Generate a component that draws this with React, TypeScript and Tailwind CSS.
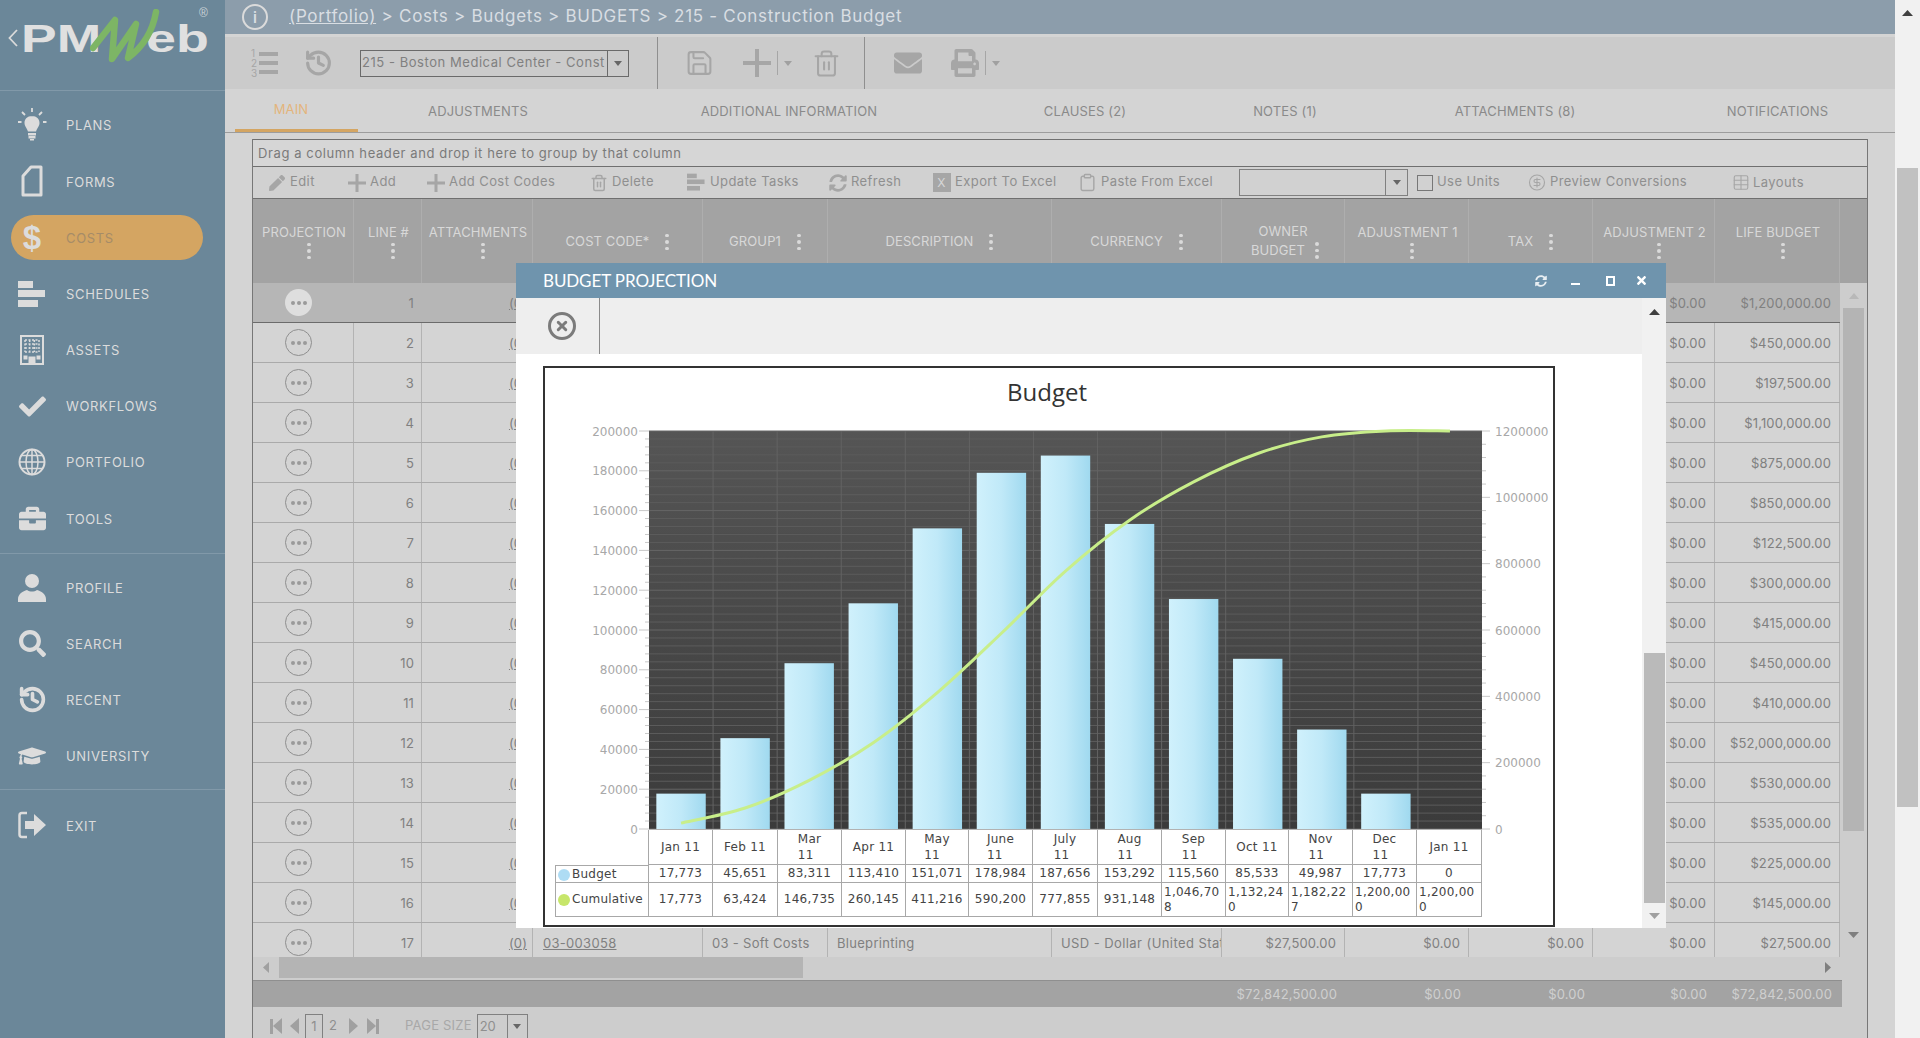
import React from "react";
import { History, Save, Trash2, CircleX, Clipboard, CircleDollarSign, Table } from "lucide-react";
import { FaCheck, FaBriefcase, FaGraduationCap, FaSearch, FaEnvelope, FaPrint, FaPen, FaSyncAlt, FaTimes } from "react-icons/fa";

const Bulb = () => (
  <svg width="30" height="36" viewBox="0 0 30 36" fill="#dcdcdc">
    <path d="M15 9c-4.600 0-7.500 3.200-7.500 7 0 3.400 2.600 5 3.400 8.500h8.200c.8-3.500 3.400-5.100 3.400-8.500 0-3.800-2.900-7-7.500-7z" />
    <rect x="11" y="26" width="8" height="2.500" /><rect x="11.500" y="29" width="7" height="2.500" /><rect x="13" y="32" width="4" height="1.500" />
    <g stroke="#dcdcdc" strokeWidth="1.800"><path d="M15 1v4M5 5l3 3M25 5l-3 3M1 15h3.500M26 15h3.500" /></g>
  </svg>
);
const FormIcon = () => (
  <svg width="22" height="32" viewBox="0 0 22 32" fill="none" stroke="#dcdcdc" strokeWidth="3">
    <path d="M2 11 10 2h10v28H2z" strokeLinejoin="round" />
  </svg>
);
const SchedIcon = ({ c = "#dcdcdc", s = 1 }: { c?: string; s?: number }) => (
  <svg width={28 * s} height={28 * s} viewBox="0 0 28 28" fill={c}>
    <rect x="0" y="1" width="15" height="7" /><rect x="0" y="10" width="27" height="7" /><rect x="0" y="20" width="20" height="7" />
  </svg>
);
const Building = () => (
  <svg width="24" height="30" viewBox="0 0 24 30" fill="none" stroke="#dcdcdc">
    <rect x="1" y="1" width="22" height="28" strokeWidth="2" />
    <path d="M5 5h14M5 9h14M5 13h14M5 17h14M5 5v12M9.700 5v12M14.300 5v12M19 5v12" strokeWidth="1.500" strokeDasharray="2 1.500" />
    <rect x="9" y="22" width="6" height="7" fill="#dcdcdc" /><rect x="4" y="21" width="3" height="3" fill="#dcdcdc" /><rect x="17" y="21" width="3" height="3" fill="#dcdcdc" />
  </svg>
);
const GlobeIcon = () => (
  <svg width="28" height="28" viewBox="0 0 28 28" fill="none" stroke="#dcdcdc" strokeWidth="1.500">
    <circle cx="14" cy="14" r="12.500" strokeWidth="2" />
    <ellipse cx="14" cy="14" rx="6" ry="12.500" />
    <path d="M14 1.500v25M3.500 7.500h21M1.500 14h25M3.500 20.500h21" />
  </svg>
);
const UserIcon = () => (
  <svg width="28" height="30" viewBox="0 0 28 30" fill="#dcdcdc">
    <circle cx="14" cy="8" r="7" /><path d="M0 29v-3c0-5 5-8 9-9 3 2 7 2 10 0 4 1 9 4 9 9v3z" />
  </svg>
);
const ExitIcon = () => (
  <svg width="28" height="30" viewBox="0 0 28 30">
    <path d="M9 3H4C2.500 3 1.500 4 1.500 5.500v19C1.500 26 2.500 27 4 27h5" fill="none" stroke="#dcdcdc" strokeWidth="2.500" />
    <path d="M7 11h9V4l12 11-12 11v-7H7z" fill="#dcdcdc" />
  </svg>
);
const Tri = ({ d, c = "#a0a0a0", w = 8, h = 5 }: { d: "u" | "d" | "l" | "r"; c?: string; w?: number; h?: number }) => {
  const pts = d === "d" ? "0,0 10,0 5,10" : d === "u" ? "0,10 10,10 5,0" : d === "l" ? "10,0 10,10 0,5" : "0,0 0,10 10,5";
  return (
    <svg width={w} height={h} viewBox="0 0 10 10" preserveAspectRatio="none" className="shrink-0"><polygon points={pts} fill={c} /></svg>
  );
};
const PlusIcon = ({ s = 28, t = 4 }: { s?: number; t?: number }) => (
  <svg width={s} height={s} viewBox={`0 0 ${s} ${s}`} fill="#a6a6a6">
    <rect x={(s - t) / 2} y="0" width={t} height={s} /><rect x="0" y={(s - t) / 2} width={s} height={t} />
  </svg>
);
const ListIcon = () => (
  <svg width="28" height="30" viewBox="0 0 28 30" fill="#a6a6a6">
    <rect x="8" y="4" width="19" height="4" /><rect x="8" y="13" width="19" height="4" /><rect x="8" y="22" width="19" height="4" />
    <g fontSize="10" fontFamily="Inter, sans-serif"><text x="0" y="9">1</text><text x="0" y="19">2</text><text x="0" y="29">3</text></g>
  </svg>
);
const Kebab = () => (
  <span className="flex flex-col gap-[3px] shrink-0">
    <span className="w-[4px] h-[3.500px] rounded-full bg-[#dadada]" /><span className="w-[4px] h-[3.500px] rounded-full bg-[#dadada]" /><span className="w-[4px] h-[3.500px] rounded-full bg-[#dadada]" />
  </span>
);

const nav1 = [
  ["PLANS", <Bulb />], ["FORMS", <FormIcon />], ["COSTS", <span className="text-[33px] leading-none font-bold text-[#dcdcdc] [font-family:'Liberation_Sans',sans-serif]">$</span>],
  ["SCHEDULES", <SchedIcon />], ["ASSETS", <Building />], ["WORKFLOWS", <FaCheck size={27} color="#dcdcdc" />],
  ["PORTFOLIO", <GlobeIcon />], ["TOOLS", <FaBriefcase size={27} color="#dcdcdc" />],
] as const;
const nav2 = [
  ["PROFILE", <UserIcon />], ["SEARCH", <FaSearch size={27} color="#dcdcdc" />], ["RECENT", <History size={29} color="#dcdcdc" strokeWidth={3} />],
  ["UNIVERSITY", <FaGraduationCap size={28} color="#dcdcdc" />],
] as const;

const NavRow = ({ label, icon, active }: { label: string; icon: React.ReactNode; active?: boolean }) => (
  <div className="h-[56.200px] flex items-center pl-[11px]">
    <div className={`w-[192px] h-[45px] rounded-full flex items-center ${active ? "bg-[#d4a562]" : ""}`}>
      <div className="w-[42px] flex justify-center items-center">{icon}</div>
      <span className={`ml-[13px] pt-[2px] text-[13px] tracking-[0.65px] ${active ? "text-[#a68c68]" : "text-[#dcdcdc]"}`}>{label}</span>
    </div>
  </div>
);

const Sidebar = () => (
  <aside className="w-[225px] shrink-0 h-full bg-[#6b8799] flex flex-col">
    <div className="relative h-[91px] shrink-0 border-b border-[#8199a9] [font-family:'Liberation_Sans',sans-serif]">
      <svg className="absolute left-[8px] top-[29px]" width="10" height="18" viewBox="0 0 10 18" fill="none" stroke="#dadada" strokeWidth="1.800"><path d="M9 1 1.500 9 9 17" /></svg>
      <span className="absolute left-[21px] top-[19px] text-[39px] leading-[39px] font-bold text-[#e0e0e0] origin-left [transform:scaleX(1.370)]">PM</span>
      <span className="absolute left-[146px] top-[19px] text-[39px] leading-[39px] font-bold text-[#e0e0e0] origin-left [transform:scaleX(1.380)]">eb</span>
      <span className="absolute left-[199px] top-[7px] text-[12px] leading-none text-[#c9d2d8]">®</span>
      <svg className="absolute left-[90px] top-[9px]" width="70" height="56" viewBox="0 0 70 56" fill="none" stroke="#7db565" strokeWidth="6.500" strokeLinejoin="round" strokeLinecap="round">
        <path d="M3 39 25 11 22 50 46 15 38 49C50 40 62 26 66 3" />
      </svg>
    </div>
    <div className="pt-[6px] pb-[6px] border-b border-[#8199a9]">
      {nav1.map(([l, i], k) => <NavRow key={k} label={l} icon={i} active={l === "COSTS"} />)}
    </div>
    <div className="pt-[6px] pb-[5px] border-b border-[#8199a9]">
      {nav2.map(([l, i], k) => <NavRow key={k} label={l} icon={i} />)}
    </div>
    <div className="pt-[7px]"><NavRow label="EXIT" icon={<ExitIcon />} /></div>
  </aside>
);

const TopBars = () => (
  <>
    <div className="h-[34px] shrink-0 bg-[#8c9dab] flex items-center pl-[17px] text-[#d9dee3] [font-family:Inter,sans-serif]">
      <span className="w-[26px] h-[26px] rounded-full border-2 border-[#dbdbdb] flex items-center justify-center text-[15px] font-semibold leading-none">i</span>
      <span className="ml-[21px] text-[17px] tracking-[0.7px]"><span className="underline">(Portfolio)</span> &gt; Costs &gt; Budgets &gt; BUDGETS &gt; 215 - Construction Budget</span>
    </div>
    <div className="h-[55px] shrink-0 bg-[#cbcbcb] border-t-[3px] border-[#d4d4d4] flex items-center">
      <span className="ml-[26px] w-[28px] flex"><ListIcon /></span>
      <span className="ml-[25px] w-[29px] flex"><History size={32} color="#a6a6a6" strokeWidth={2.600} /></span>
      <div className="ml-[27px] w-[269px] h-[27px] border border-[#6a6a6a] flex items-center text-[13px] tracking-[0.55px] text-[#808080]">
        <span className="flex-1 pl-[1px] overflow-hidden whitespace-nowrap">215 - Boston Medical Center - Const</span>
        <span className="w-[21px] h-full border-l border-[#6a6a6a] flex items-center justify-center"><Tri d="d" c="#666" /></span>
      </div>
      <span className="ml-[28px] w-px h-full bg-[#8f8f8f]" />
      <span className="ml-[27px] w-[29px] flex"><Save size={34} color="#a6a6a6" strokeWidth={1.700} /></span>
      <span className="ml-[29px]"><PlusIcon /></span>
      <span className="ml-[6px] w-px h-[24px] bg-[#a6a6a6]" />
      <span className="ml-[6px]"><Tri d="d" /></span>
      <span className="ml-[20px] w-[29px] flex"><Trash2 size={33} color="#a6a6a6" strokeWidth={1.700} /></span>
      <span className="ml-[23px] w-px h-full bg-[#8f8f8f]" />
      <span className="ml-[29px] w-[28px] flex"><FaEnvelope size={28} color="#a6a6a6" /></span>
      <span className="ml-[29px] w-[28px] flex"><FaPrint size={28} color="#a6a6a6" /></span>
      <span className="ml-[6px] w-px h-[24px] bg-[#a6a6a6]" />
      <span className="ml-[6px]"><Tri d="d" /></span>
    </div>
    <div className="h-[44px] shrink-0 bg-[#d4d4d4] border-b border-[#9c9c9c] flex pl-[10px] text-[13px] tracking-[0.15px] text-[#8a8a8a]">
      <div className="w-[123px] pr-[11px] pt-[2px] flex items-center justify-center border-b-[3px] border-[#d4a562] text-[#e3b47c]">MAIN</div>
      <div className="w-[240px] pt-[2px] flex items-center justify-center">ADJUSTMENTS</div>
      <div className="w-[382px] pt-[2px] flex items-center justify-center">ADDITIONAL INFORMATION</div>
      <div className="w-[210px] pt-[2px] flex items-center justify-center">CLAUSES (2)</div>
      <div className="w-[190px] pt-[2px] flex items-center justify-center">NOTES (1)</div>
      <div className="w-[270px] pt-[2px] flex items-center justify-center">ATTACHMENTS (8)</div>
      <div className="w-[245px] pl-[10px] pt-[2px] flex items-center justify-center">NOTIFICATIONS</div>
    </div>
  </>
);

const tbIcon = "#a6a6a6";
const toolItems: [string, string, React.ReactNode][] = [
  ["w-[80px]", "Edit", <FaPen size={16} color={tbIcon} />],
  ["w-[79px]", "Add", <PlusIcon s={18} t={3} />],
  ["w-[163px]", "Add Cost Codes", <PlusIcon s={18} t={3} />],
  ["w-[98px]", "Delete", <Trash2 size={18} color={tbIcon} />],
  ["w-[141px]", "Update Tasks", <SchedIcon c={tbIcon} s={0.65} />],
  ["w-[104px]", "Refresh", <FaSyncAlt size={18} color={tbIcon} />],
  ["w-[146px]", "Export To Excel", <span className="w-[18px] h-[19px] bg-[#a6a6a6] text-[#d6d6d6] text-[12px] flex items-center justify-center">X</span>],
  ["w-[161px]", "Paste From Excel", <Clipboard size={19} color={tbIcon} strokeWidth={1.800} />],
];

const GridToolbar = () => (
  <div className="h-[33px] shrink-0 bg-[#d1d1d1] border-t border-b border-[#6f6f6f] flex items-center pl-[14px] text-[13px] tracking-[0.42px] text-[#8f8f8f]">
    {toolItems.map(([w, t, ic]) => (
      <div key={t} className={`${w} shrink-0 flex items-center gap-[4px]`}>
        <span className="flex w-[19px] justify-center">{ic}</span><span className="-mt-[1px]">{t}</span>
      </div>
    ))}
    <div className="w-[169px] h-[27px] shrink-0 border border-[#808080] flex justify-end">
      <span className="w-[22px] h-full border-l border-[#808080] flex items-center justify-center"><Tri d="d" c="#666" /></span>
    </div>
    <span className="ml-[9px] w-[16px] h-[16px] border border-[#777] shrink-0" />
    <span className="ml-[4px] w-[91px] -mt-[1px] shrink-0">Use Units</span>
    <span className="w-[18px] shrink-0 flex"><CircleDollarSign size={19} color={tbIcon} strokeWidth={1.500} /></span>
    <span className="ml-[4px] w-[182px] -mt-[1px] shrink-0 whitespace-nowrap">Preview Conversions</span>
    <span className="w-[18px] shrink-0 flex"><Table size={19} color={tbIcon} strokeWidth={1.500} /></span>
    <span className="ml-[3px]">Layouts</span>
  </div>
);

const colW = ["w-[101px]", "w-[68px]", "w-[111px]", "w-[170px]", "w-[125px]", "w-[224px]", "w-[170px]", "w-[123px]", "w-[124px]", "w-[124px]", "w-[122px]", "w-[125px]"];
const heads: [string, boolean][] = [
  ["PROJECTION", true], ["LINE #", true], ["ATTACHMENTS", true], ["COST CODE*", false], ["GROUP1", false], ["DESCRIPTION", false], ["CURRENCY", false],
  ["OWNER BUDGET", false], ["ADJUSTMENT 1", true], ["TAX", false], ["ADJUSTMENT 2", true], ["LIFE BUDGET", true],
];
const lifes = ["1,200,000", "450,000", "197,500", "1,100,000", "875,000", "850,000", "122,500", "300,000", "415,000", "450,000", "410,000", "52,000,000", "530,000", "535,000", "225,000", "145,000", "27,500"];

const GridHeader = () => (
  <div className="h-[84px] shrink-0 bg-[#a3a3a3] flex text-[13px] tracking-[0.1px] text-[#d8d8d8]">
    {heads.map(([t, below], i) => (
      <div key={t} className={`${colW[i]} shrink-0 border-r border-[#aeaeae] flex items-center justify-center text-center ${below ? "flex-col" : "pt-[2px] gap-[16px]"}`}>
        {t === "OWNER BUDGET" ? (
          <div className="flex flex-col items-center -mt-[2px]">
            <span className="leading-[19px]">OWNER</span>
            <span className="flex items-center gap-[10px] ml-[4px]"><span className="leading-[19px]">BUDGET</span><Kebab /></span>
          </div>
        ) : below ? (
          <><span className="ml-[2px]">{t}</span><span className="ml-[11px]"><Kebab /></span></>
        ) : (
          <><span>{t}</span><Kebab /></>
        )}
      </div>
    ))}
  </div>
);

const Row = ({ i, life }: { i: number; life: string }) => {
  const sel = i === 0;
  const last = i === 16;
  const b = sel ? "border-transparent" : "border-[#b3b3b3]";
  const v = `border-r ${b} pt-[2px]`;
  return (
    <div className={`h-[40px] flex shrink-0 text-[13px] tracking-[0.12px] text-[#808080] border-b ${sel ? "bg-[#b6b6b6] border-[#6b6b6b]" : "border-[#aaaaaa]"}`}>
      <div className={`${colW[0]} border-r ${b} flex items-center justify-center pr-[9px]`}>
        <span className={`w-[27px] h-[27px] rounded-full flex items-center justify-center gap-[2px] ${sel ? "bg-[#dedede]" : "border border-[#8f8f8f]"}`}>
          <span className="w-[4px] h-[4px] rounded-full bg-[#9a9a9a]" /><span className="w-[4px] h-[4px] rounded-full bg-[#9a9a9a]" /><span className="w-[4px] h-[4px] rounded-full bg-[#9a9a9a]" />
        </span>
      </div>
      <div className={`${colW[1]} ${v} flex items-center justify-end pr-[7px]`}>{i + 1}</div>
      <div className={`${colW[2]} ${v} flex items-center justify-end pr-[5px]`}><span className="underline">(0)</span></div>
      <div className={`${colW[3]} ${v} flex items-center pl-[10px] tracking-[0.3px]`}>{last && <span className="underline">03-003058</span>}</div>
      <div className={`${colW[4]} ${v} flex items-center pl-[9px] tracking-[0.3px]`}>{last && "03 - Soft Costs"}</div>
      <div className={`${colW[5]} ${v} flex items-center pl-[9px] tracking-[0.3px]`}>{last && "Blueprinting"}</div>
      <div className={`${colW[6]} ${v} flex items-center pl-[9px] overflow-hidden whitespace-nowrap tracking-[0.42px]`}>{last && "USD - Dollar (United States)"}</div>
      <div className={`${colW[7]} ${v} flex items-center justify-end pr-[8px]`}>{last && "$27,500.00"}</div>
      <div className={`${colW[8]} ${v} flex items-center justify-end pr-[8px]`}>{last && "$0.00"}</div>
      <div className={`${colW[9]} ${v} flex items-center justify-end pr-[8px]`}>{last && "$0.00"}</div>
      <div className={`${colW[10]} ${v} flex items-center justify-end pr-[8px]`}>$0.00</div>
      <div className={`${colW[11]} ${v} flex items-center justify-end pr-[8px]`}>${life}.00</div>
    </div>
  );
};

const GridBody = () => (
  <div className="h-[674px] shrink-0 flex overflow-hidden">
    <div className="w-[1587px] shrink-0 flex flex-col">
      {lifes.map((l, i) => <Row key={i} i={i} life={l} />)}
    </div>
    <div className="flex-1 bg-[#cdcdcd] flex flex-col items-center relative">
      <div className="h-[25px] flex items-center"><Tri d="u" c="#b8b8b8" w={10} h={6} /></div>
      <div className="w-[21px] h-[523px] bg-[#b4b4b4]" />
      <div className="mt-auto h-[33px] flex items-start pt-[8px]"><Tri d="d" c="#7f7f7f" w={11} h={6} /></div>
    </div>
  </div>
);

const HScroll = () => (
  <div className="h-[23px] shrink-0 bg-[#cdcdcd] flex items-center pb-[2px]">
    <span className="w-[26px] flex justify-center"><Tri d="l" c="#a0a0a0" w={6} h={11} /></span>
    <span className="w-[524px] h-[21px] bg-[#b4b4b4]" />
    <span className="ml-auto mr-[36px]"><Tri d="r" c="#7f7f7f" w={6} h={11} /></span>
  </div>
);

const FooterRow = () => (
  <div className="h-[27px] shrink-0 bg-[#cdcdcd] flex">
    <div className="w-[1589px] shrink-0 bg-[#a3a3a3] border-t border-[#8f8f8f] flex text-[13px] tracking-[0.12px] text-[#cfcfcf]">
      <div className="w-[969px] shrink-0" />
      <div className={`${colW[7]} pt-[2px] flex items-center justify-end pr-[8px]`}>$72,842,500.00</div>
      <div className={`${colW[8]} pt-[2px] flex items-center justify-end pr-[8px]`}>$0.00</div>
      <div className={`${colW[9]} pt-[2px] flex items-center justify-end pr-[8px]`}>$0.00</div>
      <div className={`${colW[10]} pt-[2px] flex items-center justify-end pr-[8px]`}>$0.00</div>
      <div className={`${colW[11]} pt-[2px] flex items-center justify-end pr-[8px] whitespace-nowrap`}>$72,842,500.00</div>
    </div>
  </div>
);

const Pager = () => (
  <div className="flex-1 bg-[#cdcdcd] flex items-end pl-[17px] text-[13px] text-[#8f8f8f]">
    <div className="h-[24px] flex items-center">
      <span className="w-[3px] h-[15px] bg-[#a0a0a0]" />
      <Tri d="l" c="#a0a0a0" w={9} h={16} />
      <span className="ml-[8px]"><Tri d="l" c="#a0a0a0" w={9} h={16} /></span>
      <span className="ml-[6px] w-[18px] h-full border border-b-0 border-[#808080] flex items-center justify-center">1</span>
      <span className="w-[20px] text-center">2</span>
      <span className="ml-[6px]"><Tri d="r" c="#a0a0a0" w={9} h={16} /></span>
      <span className="ml-[9px]"><Tri d="r" c="#a0a0a0" w={9} h={16} /></span>
      <span className="w-[3px] h-[15px] bg-[#a0a0a0]" />
      <span className="ml-[26px] text-[13px] tracking-[0.2px] text-[#a8a8a8] whitespace-nowrap">PAGE SIZE</span>
      <span className="ml-[5px] w-[51px] shrink-0 h-full border border-b-0 border-[#808080] flex">
        <span className="w-[29px] pl-[2px] flex items-center">20</span>
        <span className="flex-1 border-l border-[#808080] flex items-center justify-center"><Tri d="d" c="#666" /></span>
      </span>
    </div>
  </div>
);

const cats: string[][] = [["Jan 11"], ["Feb 11"], ["Mar", "11"], ["Apr 11"], ["May", "11"], ["June", "11"], ["July", "11"], ["Aug", "11"], ["Sep", "11"], ["Oct 11"], ["Nov", "11"], ["Dec", "11"], ["Jan 11"]];
const budget = [17773, 45651, 83311, 113410, 151071, 178984, 187656, 153292, 115560, 85533, 49987, 17773, 0];
const budgetT = ["17,773", "45,651", "83,311", "113,410", "151,071", "178,984", "187,656", "153,292", "115,560", "85,533", "49,987", "17,773", "0"];
const cumT: string[][] = [["17,773"], ["63,424"], ["146,735"], ["260,145"], ["411,216"], ["590,200"], ["777,855"], ["931,148"], ["1,046,70", "8"], ["1,132,24", "0"], ["1,182,22", "7"], ["1,200,00", "0"], ["1,200,00", "0"]];
const cum = [17773, 63424, 146735, 260145, 411216, 590200, 777855, 931148, 1046708, 1132240, 1182227, 1200000, 1200000];

const PX0 = 104, PW = 833, PY0 = 13, PH = 398;
const cx = (i: number) => PX0 + (PW / 13) * (i + 0.5);
const linePts = cum.map((c, i) => [cx(i), PY0 + PH - (c / 1200000) * PH]);
const lineD = linePts.reduce((acc, p, i) => {
  if (i === 0) return `M${p[0]} ${p[1]}`;
  const p0 = linePts[i - 2] || linePts[i - 1];
  const p1 = linePts[i - 1];
  const p3 = linePts[i + 1] || p;
  const c1 = [p1[0] + (p[0] - p0[0]) / 6, p1[1] + (p[1] - p0[1]) / 6];
  const c2 = [p[0] - (p3[0] - p1[0]) / 6, p[1] - (p3[1] - p1[1]) / 6];
  return `${acc} C${c1[0]} ${c1[1]} ${c2[0]} ${c2[1]} ${p[0]} ${p[1]}`;
}, "");

const ChartSvg = () => (
  <svg width="1008" height="412" viewBox="0 0 1008 412" className="block overflow-visible" style={{ fontFamily: "'DejaVu Sans', sans-serif" }}>
    <defs>
      <linearGradient id="pl" x1="0" y1="0" x2="0" y2="1"><stop offset="0" stopColor="#555555" /><stop offset="1" stopColor="#3b3b3b" /></linearGradient>
      <linearGradient id="br" x1="0" y1="0" x2="1" y2="0"><stop offset="0" stopColor="#d0f1fc" /><stop offset="0.5" stopColor="#c0e9f8" /><stop offset="1" stopColor="#a0d9ef" /></linearGradient>
    </defs>
    <rect x={PX0} y={PY0} width={PW} height={PH} fill="url(#pl)" />
    {Array.from({ length: 51 }, (_, i) => {
      const y = PY0 + (PH / 50) * i;
      const major = i % 5 === 0;
      return (
        <g key={i}>
          <line x1={PX0} x2={PX0 + PW} y1={y} y2={y} stroke={major ? "#666666" : "#5c5c5c"} strokeWidth="1" />
          <line x1={PX0 - (major ? 10 : 4)} x2={PX0} y1={y} y2={y} stroke="#c8c8c8" strokeWidth="1" />
        </g>
      );
    })}
    {Array.from({ length: 12 }, (_, i) => (
      <line key={i} x1={PX0 + (PW / 13) * (i + 1)} x2={PX0 + (PW / 13) * (i + 1)} y1={PY0} y2={PY0 + PH} stroke="#636363" />
    ))}
    {Array.from({ length: 31 }, (_, i) => {
      const y = PY0 + (PH / 30) * i;
      const major = i % 5 === 0;
      return <line key={i} x1={PX0 + PW} x2={PX0 + PW + (major ? 8 : 4)} y1={y} y2={y} stroke="#c8c8c8" />;
    })}
    {budget.map((b, i) => {
      const h = (b / 200000) * PH;
      return b > 0 ? <rect key={i} x={cx(i) - 24.700} y={PY0 + PH - h} width="49.400" height={h} fill="url(#br)" /> : null;
    })}
    <path d={lineD} fill="none" stroke="#c8ee8a" strokeWidth="3" />
    {Array.from({ length: 11 }, (_, i) => (
      <text key={i} x="93" y={PY0 + PH - (PH / 10) * i + 4.500} textAnchor="end" fontSize="12" fill="#a8a8a8">{i === 0 ? "0" : String(i * 20000)}</text>
    ))}
    {Array.from({ length: 7 }, (_, i) => (
      <text key={i} x="950" y={PY0 + PH - (PH / 6) * i + 4.500} fontSize="12" fill="#a8a8a8">{i === 0 ? "0" : String(i * 200000)}</text>
    ))}
  </svg>
);

const cellB = "border-r border-b border-[#a8a8a8]";
const DataTable = () => (
  <div className="ml-[10px] grid grid-cols-[94px_64px_65px_64px_64px_63px_64px_65px_64px_64px_63px_64px_64px_65px] grid-rows-[35px_18px_34px] w-[927px] text-[12px] tracking-[0.25px] leading-[15.500px] text-[#444444] [font-family:'DejaVu_Sans',sans-serif]">
    <div className="border-r border-[#a8a8a8]" />
    {cats.map((c, i) => (
      <div key={i} className={`${cellB} pt-[1px] flex items-center justify-center`}>
        <div>{c.map((l, k) => <div key={k}>{l}</div>)}</div>
      </div>
    ))}
    <div className={`${cellB} border-l border-t pt-[1px] flex items-center pl-[2px] whitespace-nowrap`}>
      <span className="w-[12px] h-[12px] rounded-full bg-[#aedcf4] mr-[2px]" />Budget
    </div>
    {budgetT.map((b, i) => <div key={i} className={`${cellB} pt-[1px] flex items-center justify-center`}>{b}</div>)}
    <div className={`${cellB} border-l pt-[1px] flex items-center pl-[2px] whitespace-nowrap`}>
      <span className="w-[12px] h-[12px] rounded-full bg-[#c7e66a] mr-[2px]" />Cumulative
    </div>
    {cumT.map((c, i) => (
      <div key={i} className={`${cellB} pt-[1px] flex items-center ${c.length > 1 ? "justify-start pl-[2px]" : "justify-center"}`}>
        <div>{c.map((l, k) => <div key={k}>{l}</div>)}</div>
      </div>
    ))}
  </div>
);

const Dialog = () => (
  <div className="absolute left-[516px] top-[263px] w-[1150px] h-[665px] bg-white flex flex-col">
    <div className="h-[35px] shrink-0 bg-[#6f94ad] flex items-center pl-[27px] text-white">
      <span className="text-[17px] [font-family:Lato,sans-serif] tracking-[-0.1px]">BUDGET PROJECTION</span>
      <span className="ml-auto flex items-center pr-[18px]">
        <span className="w-[14px] flex justify-center"><FaSyncAlt size={12} color="#e8eef2" /></span>
        <span className="ml-[20px] w-[14px] flex justify-center"><span className="w-[9px] h-[2px] mt-[7px] bg-white" /></span>
        <span className="ml-[21px] w-[14px] flex justify-center"><span className="w-[9px] h-[10px] border-2 border-white" /></span>
        <span className="ml-[17px] w-[14px] flex justify-center"><FaTimes size={13} color="#fff" /></span>
      </span>
    </div>
    <div className="flex-1 flex min-h-0">
      <div className="w-[1126px] shrink-0 flex flex-col">
        <div className="h-[56px] shrink-0 bg-[#eeeeee] flex">
          <div className="w-[84px] border-r border-[#8a8a8a] flex items-center justify-center pl-[8px]">
            <CircleX size={30} color="#7b7b7b" strokeWidth={2.400} />
          </div>
        </div>
        <div className="ml-[27px] mt-[12px] w-[1012px] h-[561px] border-2 border-[#333333] bg-white overflow-hidden">
          <div className="h-[48px] mb-[2px] flex items-center justify-center pr-[4px] text-[24px] text-[#333333] [font-family:'Open_Sans',sans-serif]">Budget</div>
          <ChartSvg />
          <DataTable />
        </div>
      </div>
      <div className="flex-1 bg-[#f1f1f1] flex flex-col items-center">
        <div className="h-[28px] flex items-center"><Tri d="u" c="#404040" w={11} h={6} /></div>
        <div className="mt-[327px] w-[21px] h-[250px] bg-[#bababa]" />
        <div className="h-[25px] flex items-center"><Tri d="d" c="#a0a0a0" w={11} h={6} /></div>
      </div>
    </div>
  </div>
);

export default function App() {
  return (
    <div className="relative w-[1920px] h-[1038px] flex overflow-hidden bg-[#d3d3d3] [font-family:Inter,sans-serif]">
      <Sidebar />
      <main className="w-[1670px] shrink-0 h-full flex flex-col bg-[#d4d4d4]">
        <TopBars />
        <div className="flex-1 min-h-0 px-[27px] pt-[6px]">
          <div className="w-[1616px] h-full border-x border-[#777777] flex flex-col">
            <div className="h-[27px] shrink-0 border-t border-[#6f6f6f] bg-[#d6d6d6] flex items-center pl-[5px] pt-[2px] text-[13px] tracking-[0.6px] text-[#7a7a7a]">Drag a column header and drop it here to group by that column</div>
            <GridToolbar />
            <GridHeader />
            <GridBody />
            <HScroll />
            <FooterRow />
            <Pager />
          </div>
        </div>
      </main>
      <div className="w-[25px] shrink-0 h-full bg-[#f1f1f1] flex flex-col items-center">
        <div className="h-[168px] pt-[10px]"><Tri d="u" c="#404040" w={11} h={6} /></div>
        <div className="w-[21px] h-[639px] bg-[#c1c1c1]" />
      </div>
      <Dialog />
    </div>
  );
}
